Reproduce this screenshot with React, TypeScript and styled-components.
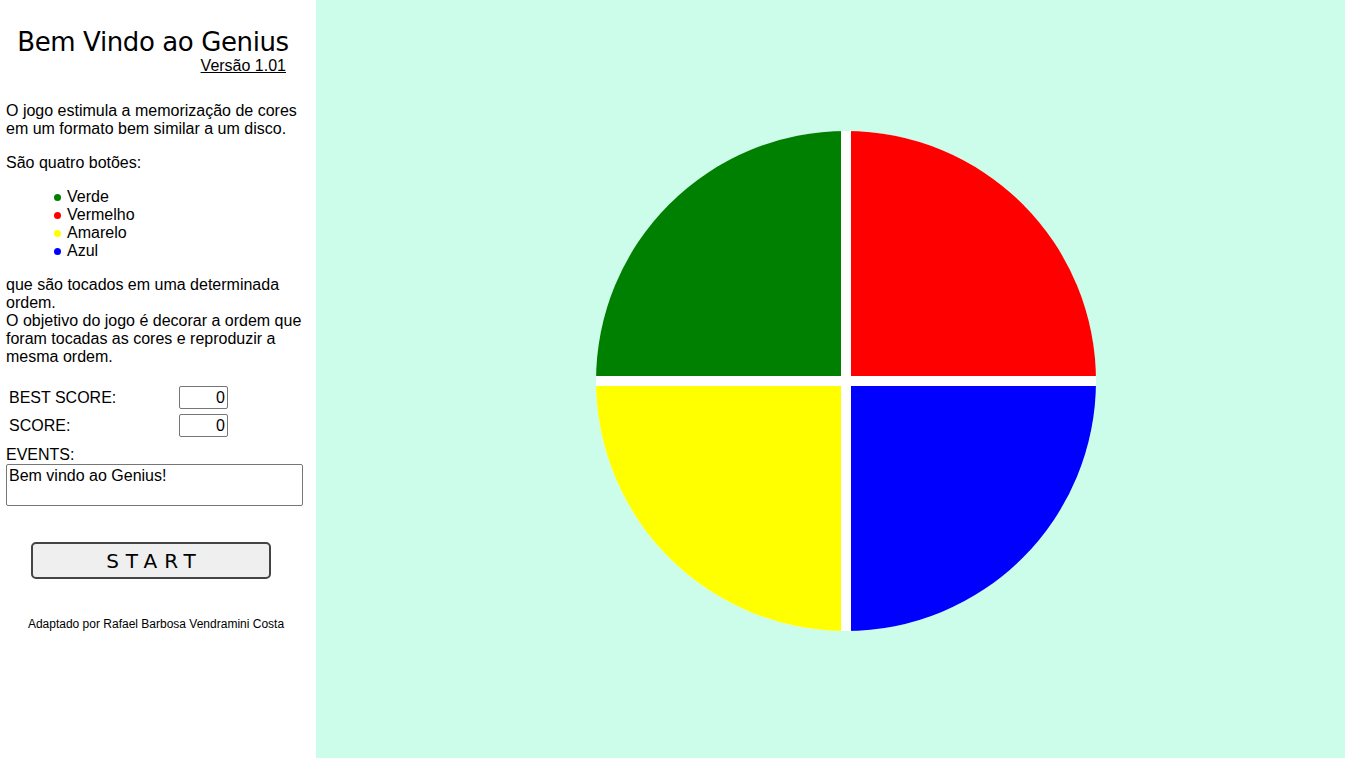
import React from "react";
import styled, { createGlobalStyle } from "styled-components";

const GlobalStyle = createGlobalStyle`
  html, body {
    margin: 0;
    padding: 0;
    height: 100%;
  }

  body {
    font-family: "Liberation Sans", Arial, sans-serif;
    color: #000;
    background: #fff;
  }
`;

const colors = [
  { name: "Verde", value: "#008000" },
  { name: "Vermelho", value: "#ff0000" },
  { name: "Amarelo", value: "#ffff00" },
  { name: "Azul", value: "#0000ff" },
];

export default function App() {
  return (
    <>
      <GlobalStyle />
      <Page>
        <Sidebar>
          <Header>
            <Title>Bem Vindo ao Genius</Title>
            <Version>Versão 1.01</Version>
          </Header>

          <Paragraph>
            O jogo estimula a memorização de cores em um formato bem similar a
            um disco.
          </Paragraph>
          <Paragraph>São quatro botões:</Paragraph>

          <ColorList>
            {colors.map((c) => (
              <ColorItem key={c.name} $dot={c.value}>
                {c.name}
              </ColorItem>
            ))}
          </ColorList>

          <Paragraph>
            que são tocados em uma determinada ordem.
            <br />O objetivo do jogo é decorar a ordem que foram tocadas as
            cores e reproduzir a mesma ordem.
          </Paragraph>

          <ScoreTable>
            <ScoreRow>
              <ScoreLabel>BEST SCORE:</ScoreLabel>
              <ScoreInput readOnly value="0" />
            </ScoreRow>
            <ScoreRow>
              <ScoreLabel>SCORE:</ScoreLabel>
              <ScoreInput readOnly value="0" />
            </ScoreRow>
          </ScoreTable>

          <EventsLabel>EVENTS:</EventsLabel>
          <Events readOnly value="Bem vindo ao Genius!" />

          <StartButton>START</StartButton>

          <Credits>Adaptado por Rafael Barbosa Vendramini Costa</Credits>
        </Sidebar>

        <Board>
          <Disc>
            <Pad $color="#008000" />
            <Pad $color="#ff0000" />
            <Pad $color="#ffff00" />
            <Pad $color="#0000ff" />
          </Disc>
        </Board>
      </Page>
    </>
  );
}

const Page = styled.div`
  display: flex;
  width: 100%;
  height: 100vh;
  overflow: hidden;
`;

const Sidebar = styled.aside`
  width: 316px;
  flex-shrink: 0;
  box-sizing: border-box;
  padding: 0 12px 0 6px;
  background: #fff;
  font-size: 16px;
  line-height: 18px;
`;

const Header = styled.div`
  display: flex;
  flex-direction: column;
  align-items: flex-end;
  width: 280px;
  padding-top: 26px;
  margin-bottom: 28px;
`;

const Title = styled.h1`
  margin: 0 0 0 14px;
  align-self: center;
  white-space: nowrap;
  font-family: "DejaVu Sans", sans-serif;
  font-weight: normal;
  font-size: 26px;
  line-height: 32px;
  letter-spacing: -0.4px;
`;

const Version = styled.a`
  font-size: 16px;
  line-height: 16px;
  color: #000;
  text-decoration: underline;
`;

const Paragraph = styled.p`
  margin: 0 0 16px;
`;

const ColorList = styled.ul`
  list-style: none;
  margin: 0 0 16px;
  padding-left: 46px;
`;

const ColorItem = styled.li<{ $dot: string }>`
  display: flex;
  align-items: center;

  &::before {
    content: "";
    width: 7px;
    height: 7px;
    margin: 1px 6px 0 2px;
    border-radius: 50%;
    background: ${(p) => p.$dot};
  }
`;

const ScoreTable = styled.div`
  display: flex;
  flex-direction: column;
  gap: 5px;
  padding: 4px 0 0 3px;
`;

const ScoreRow = styled.div`
  display: flex;
  align-items: center;
`;

const ScoreLabel = styled.span`
  width: 170px;
`;

const ScoreInput = styled.input`
  box-sizing: border-box;
  width: 49px;
  height: 23px;
  padding: 0 2px;
  border: 1px solid #767676;
  border-radius: 2px;
  text-align: right;
  font-family: "Liberation Sans", Arial, sans-serif;
  font-size: 16px;
  color: #000;
  background: #fff;
`;

const EventsLabel = styled.div`
  margin-top: 9px;
  line-height: 18px;
`;

const Events = styled.textarea`
  display: block;
  box-sizing: border-box;
  width: 297px;
  height: 42px;
  margin: 0;
  padding: 2px;
  border: 1px solid #767676;
  border-radius: 2px;
  resize: none;
  font-family: "Liberation Sans", Arial, sans-serif;
  font-size: 16px;
  line-height: 18px;
  color: #000;
`;

const StartButton = styled.button`
  display: block;
  box-sizing: border-box;
  width: 240px;
  height: 37px;
  margin: 36px 0 0 25px;
  padding: 0 0 0 7px;
  border: 2px solid #444;
  border-radius: 5px;
  background: #efefef;
  font-family: "DejaVu Sans", sans-serif;
  font-size: 20px;
  letter-spacing: 7px;
  color: #000;
  cursor: pointer;
`;

const Credits = styled.div`
  margin-top: 38px;
  width: 300px;
  text-align: center;
  font-size: 12px;
  line-height: 14px;
`;

const Board = styled.main`
  flex: 1;
  display: flex;
  align-items: flex-start;
  padding: 131px 0 0 280px;
  background: #ccfdeb;
`;

const Disc = styled.div`
  display: grid;
  grid-template-columns: 245px 245px;
  grid-template-rows: 245px 245px;
  gap: 10px;
  width: 500px;
  height: 500px;
  border-radius: 50%;
  overflow: hidden;
  background: #fff;
`;

const Pad = styled.div<{ $color: string }>`
  background: ${(p) => p.$color};
  cursor: pointer;
`;
